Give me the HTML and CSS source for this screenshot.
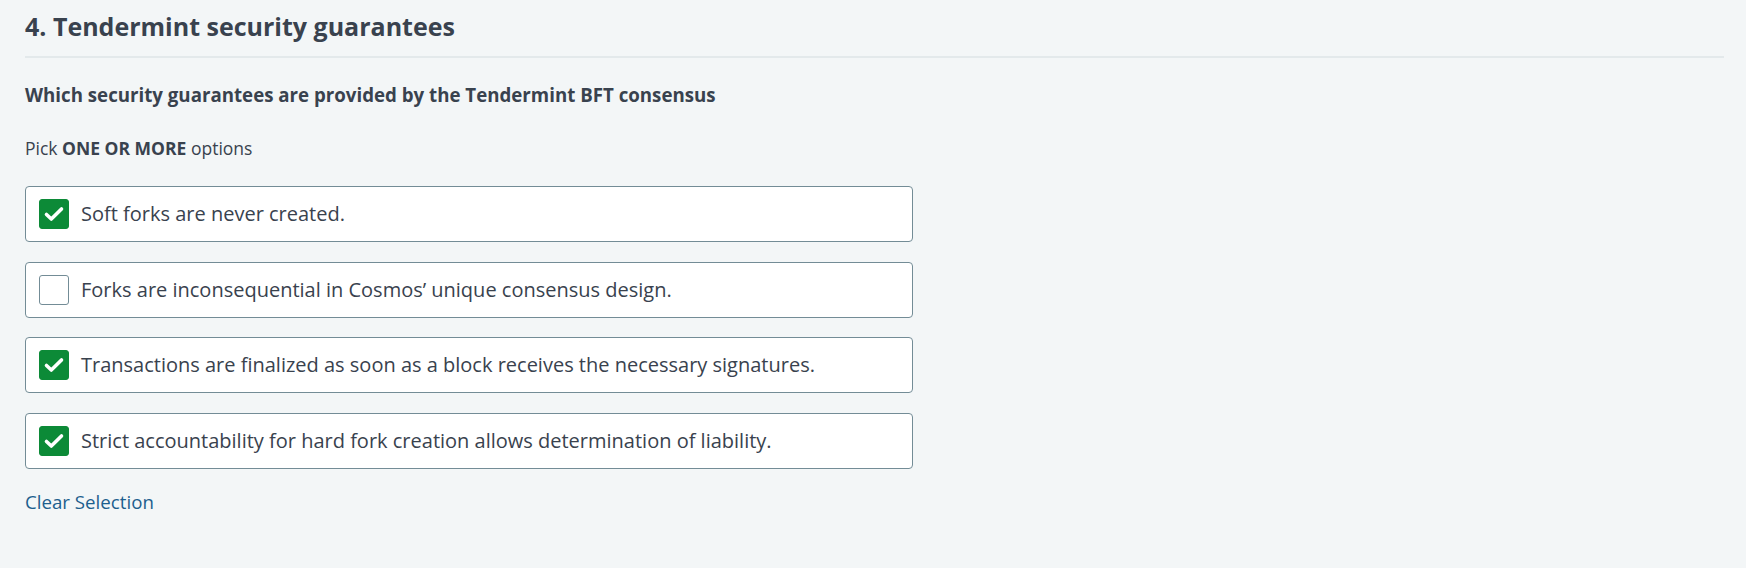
FILE: index.html
```html
<!DOCTYPE html>
<html lang="en">
<head>
<meta charset="utf-8">
<title>Tendermint security guarantees</title>
<link rel="stylesheet" href="styles.css">
</head>
<body>
<main class="page">
  <h2 class="title">4. Tendermint security guarantees</h2>
  <p class="question">Which security guarantees are provided by the Tendermint BFT consensus</p>
  <p class="hint">Pick <strong>ONE OR MORE</strong> options</p>
  <div class="options">
    <label class="option">
      <span class="box checked"><svg viewBox="0 0 30 30" width="30" height="30"><polyline points="7.5,15.5 12.3,20 22.5,10" /></svg></span>
      <span class="label">Soft forks are never created.</span>
    </label>
    <label class="option">
      <span class="box"></span>
      <span class="label">Forks are inconsequential in Cosmos’ unique consensus design.</span>
    </label>
    <label class="option">
      <span class="box checked"><svg viewBox="0 0 30 30" width="30" height="30"><polyline points="7.5,15.5 12.3,20 22.5,10" /></svg></span>
      <span class="label">Transactions are finalized as soon as a block receives the necessary signatures.</span>
    </label>
    <label class="option">
      <span class="box checked"><svg viewBox="0 0 30 30" width="30" height="30"><polyline points="7.5,15.5 12.3,20 22.5,10" /></svg></span>
      <span class="label">Strict accountability for hard fork creation allows determination of liability.</span>
    </label>
  </div>
  <a class="clear" href="#">Clear Selection</a>
</main>
</body>
</html>
```
FILE: styles.css
```css
* { box-sizing: border-box; }
html, body {
  margin: 0;
  padding: 0;
  background: #f3f6f7;
  height: 100%;
}
body {
  font-family: "Open Sans", "Liberation Sans", sans-serif;
  color: #39424e;
}
.page {
  padding: 9.3px 22px 0 25px;
  display: flex;
  flex-direction: column;
  align-items: flex-start;
}
.title {
  align-self: stretch;
  margin: 0;
  font-size: 25px;
  line-height: 34px;
  font-weight: 700;
  padding-bottom: 12.7px;
  border-bottom: 2px solid #e3e9eb;
}
.question {
  margin: 23.5px 0 0 0;
  font-size: 18.7px;
  line-height: 28px;
  font-weight: 700;
}
.hint {
  margin: 26.7px 0 0 0;
  font-size: 17.5px;
  line-height: 24px;
}
.hint strong { font-weight: 700; }
.options {
  margin: 25.8px 0 0 0;
  display: flex;
  flex-direction: column;
  gap: 19.67px;
  width: 888px;
}
.option {
  display: flex;
  align-items: center;
  gap: 12px;
  height: 56px;
  padding: 0 13px;
  background: #ffffff;
  border: 1px solid #738c96;
  border-radius: 4px;
  font-size: 20px;
  line-height: 28px;
}
.box {
  flex: 0 0 30px;
  width: 30px;
  height: 30px;
  border: 1px solid #738c96;
  border-radius: 3px;
  background: #fff;
  display: flex;
}
.box.checked {
  background: #0c8a37;
  border-color: #0c8a37;
}
.box svg {
  margin: -1px;
}
.box polyline {
  fill: none;
  stroke: #ffffff;
  stroke-width: 3.6;
  stroke-linecap: round;
  stroke-linejoin: round;
}
.clear {
  margin: 19px 0 0 0;
  font-size: 18.7px;
  line-height: 28px;
  color: #1d5f8e;
  text-decoration: none;
}
```
